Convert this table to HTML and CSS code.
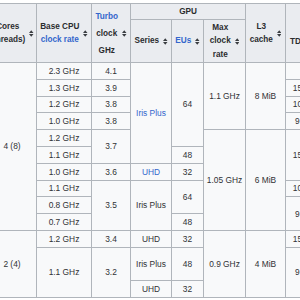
FILE: index.html
```html
<!DOCTYPE html>
<html lang="en">
<head>
<meta charset="utf-8">
<title>Ice Lake processors</title>
<link rel="stylesheet" href="styles.css">
</head>
<body>
<div class="frame">
<table class="wikitable">
<colgroup>
<col class="c-cores"><col class="c-base"><col class="c-turbo"><col class="c-series"><col class="c-eus"><col class="c-max"><col class="c-l3"><col class="c-tdp"><col class="c-ctdp">
</colgroup>
<thead>
<tr class="h1">
<th rowspan="2"><span class="hd"><span class="tx">Cores<br>(threads)</span><svg class="sort" viewBox="0 0 10 14"><path d="M5 0L10 6H0z M0 8h10L5 14z"/></svg></span></th>
<th rowspan="2"><span class="hd"><span class="tx">Base CPU<br><a href="#">clock rate</a></span><svg class="sort" viewBox="0 0 10 14"><path d="M5 0L10 6H0z M0 8h10L5 14z"/></svg></span></th>
<th rowspan="2" class="turbo"><span class="hd"><span class="tx"><a href="#">Turbo</a><br>clock<br>GHz</span><svg class="sort" viewBox="0 0 10 14"><path d="M5 0L10 6H0z M0 8h10L5 14z"/></svg></span></th>
<th colspan="3">GPU</th>
<th rowspan="2"><span class="hd"><span class="tx">L3<br>cache</span><svg class="sort" viewBox="0 0 10 14"><path d="M5 0L10 6H0z M0 8h10L5 14z"/></svg></span></th>
<th rowspan="2" class="tdp"><span class="hd"><span class="tx">TDP</span><svg class="sort" viewBox="0 0 10 14"><path d="M5 0L10 6H0z M0 8h10L5 14z"/></svg></span></th>
<th rowspan="2">cTDP</th>
</tr>
<tr class="h2">
<th><span class="hd"><span class="tx">Series</span><svg class="sort" viewBox="0 0 10 14"><path d="M5 0L10 6H0z M0 8h10L5 14z"/></svg></span></th>
<th><span class="hd"><span class="tx"><a href="#">EUs</a></span><svg class="sort" viewBox="0 0 10 14"><path d="M5 0L10 6H0z M0 8h10L5 14z"/></svg></span></th>
<th><span class="hd"><span class="tx">Max<br>clock<br>rate</span><svg class="sort" viewBox="0 0 10 14"><path d="M5 0L10 6H0z M0 8h10L5 14z"/></svg></span></th>
</tr>
</thead>
<tbody>
<tr>
<td rowspan="10">4 (8)</td><td>2.3 GHz</td><td>4.1</td><td rowspan="6"><a href="#">Iris Plus</a></td><td rowspan="5">64</td><td rowspan="4">1.1 GHz</td><td rowspan="4">8 MiB</td><td colspan="2">28 W</td>
</tr>
<tr><td>1.3 GHz</td><td>3.9</td><td>15 W</td><td>12–25 W</td></tr>
<tr><td>1.2 GHz</td><td>3.8</td><td>10 W</td><td>—</td></tr>
<tr><td>1.0 GHz</td><td>3.8</td><td>9 W</td><td>12 W</td></tr>
<tr><td>1.2 GHz</td><td rowspan="2">3.7</td><td rowspan="6">1.05 GHz</td><td rowspan="6">6 MiB</td><td rowspan="3">15 W</td><td>12–25 W</td></tr>
<tr><td>1.1 GHz</td><td>48</td><td>12–25 W</td></tr>
<tr><td>1.0 GHz</td><td>3.6</td><td><a href="#">UHD</a></td><td>32</td><td>12–25 W</td></tr>
<tr><td>1.1 GHz</td><td rowspan="3">3.5</td><td rowspan="3">Iris Plus</td><td rowspan="2">64</td><td>10 W</td><td>—</td></tr>
<tr><td>0.8 GHz</td><td rowspan="2">9 W</td><td>12 W</td></tr>
<tr><td>0.7 GHz</td><td>48</td><td>12 W</td></tr>
<tr><td rowspan="4">2 (4)</td><td>1.2 GHz</td><td>3.4</td><td>UHD</td><td>32</td><td rowspan="4">0.9 GHz</td><td rowspan="4">4 MiB</td><td>15 W</td><td>13–25 W</td></tr>
<tr><td rowspan="3">1.1 GHz</td><td rowspan="3">3.2</td><td rowspan="2">Iris Plus</td><td rowspan="2">48</td><td rowspan="3">9 W</td><td>—</td></tr>
<tr><td>12 W</td></tr>
<tr><td>UHD</td><td>32</td><td>12 W</td></tr>
</tbody>
</table>
</div>
</body>
</html>
```
FILE: styles.css
```css
html, body {
  margin: 0;
  padding: 0;
  background: #ffffff;
}

.frame {
  width: 300px;
  height: 300px;
  overflow: hidden;
  padding-top: 3px;
  box-sizing: border-box;
}

.wikitable {
  border-collapse: collapse;
  table-layout: fixed;
  width: 392px;
  margin-left: -13px;
  font-family: "Liberation Sans", Arial, Helvetica, sans-serif;
  font-size: 8.4px;
  color: #303235;
  background: #f8f9fa;
}

.c-cores { width: 49px; }
.c-base { width: 55px; }
.c-turbo { width: 39px; }
.c-series { width: 41px; }
.c-eus { width: 32px; }
.c-max { width: 42px; }
.c-l3 { width: 40px; }
.c-tdp { width: 34px; }
.c-ctdp { width: 60px; }

.wikitable th,
.wikitable td {
  border: 1px solid #b0b5bb;
  padding: 0 2px;
  text-align: center;
  vertical-align: middle;
  white-space: nowrap;
  overflow: hidden;
}

.wikitable th {
  background: #eaecf0;
  color: #2a2c2f;
  font-weight: bold;
  font-size: 8.2px;
  line-height: 13.5px;
}

.wikitable td {
  line-height: 12px;
}

.h1 { height: 16px; }
.h2 { height: 43px; }

.wikitable tbody tr { height: 16.8px; }

.hd {
  display: inline-flex;
  align-items: center;
  gap: 4px;
}

.tx {
  display: block;
  text-align: center;
}

.turbo .tx { line-height: 17px; }

.tdp .hd { padding-top: 17px; }

.sort {
  width: 4.5px;
  height: 7px;
  fill: #3a3d41;
  flex: none;
}

a {
  color: #3366cc;
  text-decoration: none;
}
```
